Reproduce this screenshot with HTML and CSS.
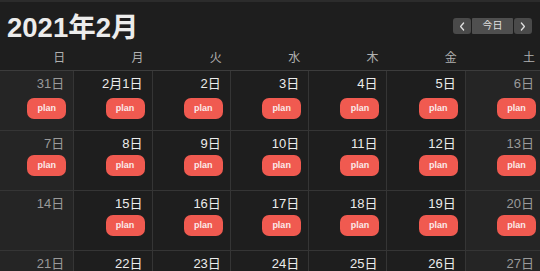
FILE: index.html
```html
<!DOCTYPE html>
<html lang="ja">
<head>
<meta charset="utf-8">
<title>2021年2月</title>
<link rel="stylesheet" href="styles.css">
</head>
<body>
<div class="cal">
  <header class="toolbar">
    <h1 class="title">2021年2月</h1>
    <div class="nav">
      <button class="nav-btn arrow" aria-label="prev"><svg width="6" height="9" viewBox="0 0 6 9"><path d="M4.6 1 L1.6 4.5 L4.6 8" fill="none" stroke="#e0e0e0" stroke-width="1.3" stroke-linecap="round" stroke-linejoin="round"/></svg></button>
      <button class="nav-btn today">今日</button>
      <button class="nav-btn arrow" aria-label="next"><svg width="6" height="9" viewBox="0 0 6 9"><path d="M1.4 1 L4.4 4.5 L1.4 8" fill="none" stroke="#e0e0e0" stroke-width="1.3" stroke-linecap="round" stroke-linejoin="round"/></svg></button>
    </div>
  </header>
  <div class="grid">
    <div class="dow">
      <div class="dow-cell">日</div>
      <div class="dow-cell">月</div>
      <div class="dow-cell">火</div>
      <div class="dow-cell">水</div>
      <div class="dow-cell">木</div>
      <div class="dow-cell">金</div>
      <div class="dow-cell">土</div>
    </div>
    <div class="week first">
      <div class="day weekend"><span class="num muted">31日</span><span class="plan">plan</span></div>
      <div class="day"><span class="num">2月1日</span><span class="plan">plan</span></div>
      <div class="day"><span class="num">2日</span><span class="plan">plan</span></div>
      <div class="day"><span class="num">3日</span><span class="plan">plan</span></div>
      <div class="day"><span class="num">4日</span><span class="plan">plan</span></div>
      <div class="day"><span class="num">5日</span><span class="plan">plan</span></div>
      <div class="day weekend"><span class="num muted">6日</span><span class="plan">plan</span></div>
    </div>
    <div class="week">
      <div class="day weekend"><span class="num muted">7日</span><span class="plan">plan</span></div>
      <div class="day"><span class="num">8日</span><span class="plan">plan</span></div>
      <div class="day"><span class="num">9日</span><span class="plan">plan</span></div>
      <div class="day"><span class="num">10日</span><span class="plan">plan</span></div>
      <div class="day"><span class="num">11日</span><span class="plan">plan</span></div>
      <div class="day"><span class="num">12日</span><span class="plan">plan</span></div>
      <div class="day weekend"><span class="num muted">13日</span><span class="plan">plan</span></div>
    </div>
    <div class="week">
      <div class="day weekend"><span class="num muted">14日</span></div>
      <div class="day"><span class="num">15日</span><span class="plan">plan</span></div>
      <div class="day"><span class="num">16日</span><span class="plan">plan</span></div>
      <div class="day"><span class="num">17日</span><span class="plan">plan</span></div>
      <div class="day"><span class="num">18日</span><span class="plan">plan</span></div>
      <div class="day"><span class="num">19日</span><span class="plan">plan</span></div>
      <div class="day weekend"><span class="num muted">20日</span><span class="plan">plan</span></div>
    </div>
    <div class="week last">
      <div class="day weekend"><span class="num muted">21日</span></div>
      <div class="day"><span class="num">22日</span></div>
      <div class="day"><span class="num">23日</span></div>
      <div class="day"><span class="num">24日</span></div>
      <div class="day"><span class="num">25日</span></div>
      <div class="day"><span class="num">26日</span></div>
      <div class="day weekend"><span class="num muted">27日</span></div>
    </div>
  </div>
</div>
</body>
</html>
```
FILE: styles.css
```css
html, body {
  margin: 0;
  padding: 0;
}
body {
  background: #1e1e1e;
  height: 271px;
  overflow: hidden;
  font-family: "Liberation Sans", "Noto Sans CJK JP", sans-serif;
  color: #e8e8e8;
  border-top: 2px solid #2c2c2c;
  box-sizing: border-box;
}
.cal {
  width: 540px;
  height: 269px;
  overflow: hidden;
}
.toolbar {
  display: flex;
  justify-content: space-between;
  align-items: flex-start;
  padding: 11px 8px 0 7px;
  height: 30px;
}
.title {
  margin: 0;
  font-size: 27.5px;
  line-height: 30px;
  font-weight: bold;
  color: #ececec;
}
.nav {
  display: flex;
  gap: 1px;
  margin-top: 5px;
}
.nav-btn {
  height: 16px;
  border: 0;
  margin: 0;
  padding: 0;
  background: #4a4a4a;
  color: #e0e0e0;
  font-family: inherit;
  font-size: 10px;
  line-height: 16px;
  border-radius: 3px;
  display: flex;
  align-items: center;
  justify-content: center;
}
.nav-btn.arrow {
  width: 18px;
}
.nav-btn.today {
  width: 41px;
  background: #4f4f4f;
  border-radius: 1px;
}
.grid {
  margin-left: -5px;
  width: 548px;
}
.dow {
  display: grid;
  grid-template-columns: repeat(7, 1fr);
  padding: 7px 0 4px;
  border-bottom: 1px solid #3c3c3c;
}
.dow-cell {
  text-align: right;
  padding-right: 8px;
  font-size: 12px;
  line-height: 16px;
  color: #b0b0b0;
}
.week {
  display: grid;
  grid-template-columns: repeat(7, 1fr);
  height: 60px;
  box-sizing: border-box;
  border-bottom: 1px solid #353535;
}
.week.last {
  height: 20px;
  border-bottom: 0;
}
.day {
  border-left: 1px solid #353535;
  display: flex;
  flex-direction: column;
  align-items: flex-end;
  padding: 5px 7px 0 0;
}
.day.weekend {
  background: #252525;
}
.num {
  font-size: 13px;
  line-height: 16px;
  padding-right: 2px;
  color: #ececec;
}
.num.muted {
  color: #9a9a9a;
}
.plan {
  margin-top: 3px;
  width: 39px;
  height: 21px;
  border-radius: 7px;
  background: #f05a50;
  color: #fbeaea;
  font-size: 9px;
  font-weight: bold;
  line-height: 21px;
  text-align: center;
}
.week.first .plan {
  margin-top: 6px;
}
```
